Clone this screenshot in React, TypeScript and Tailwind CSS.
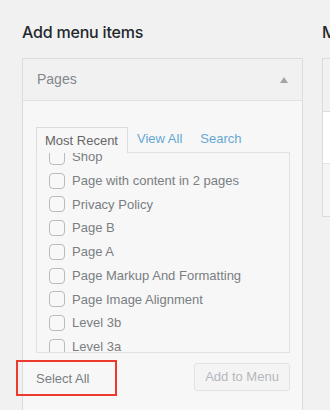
import React from 'react';

const pages = [
  'Shop',
  'Page with content in 2 pages',
  'Privacy Policy',
  'Page B',
  'Page A',
  'Page Markup And Formatting',
  'Page Image Alignment',
  'Level 3b',
  'Level 3a',
];

const App: React.FC = () => {
  return (
    <div
      className="relative w-[330px] h-[410px] overflow-hidden bg-[#f1f1f1] flex gap-[19px] pl-[22px]"
      style={{ fontFamily: '"Liberation Sans", Arial, sans-serif' }}
    >
      {/* Left column */}
      <div className="w-[281px] shrink-0">
        <h2 className="mt-[20px] h-6 leading-6 text-[16px] font-medium text-[#23282d] mb-[14px] tracking-[-0.2px] font-['Inter',sans-serif]">
          Add menu items
        </h2>

        <div className="border border-[#dcdcde] bg-[#f7f7f7] h-[400px]">
          {/* Header */}
          <div className="h-[42px] flex items-center justify-between pl-[14px] pr-[14px] bg-[#f1f1f1] border-b border-[#e2e2e2]">
            <span className="text-[14px] text-[#82878c]">Pages</span>
            <span className="w-0 h-0 border-l-[4px] border-r-[4px] border-b-[6px] border-l-transparent border-r-transparent border-b-[#a0a5aa]" />
          </div>

          {/* Body */}
          <div className="pt-[25px] pl-[13px] pr-[12px]">
            <div className="flex items-end text-[13px] h-[26px]">
              <div className="relative z-10 -mb-px h-[26px] w-[92px] border border-b-0 border-[#dcdcde] bg-[#f7f7f7] pl-2 leading-[26px] text-[#666]">
                Most Recent
              </div>
              <span className="ml-[9px] leading-[26px] text-[#65a8d4]">View All</span>
              <span className="ml-[18px] leading-[26px] text-[#65a8d4]">Search</span>
            </div>

            <div className="h-[201px] border border-[#e2e2e2] bg-[#f7f7f7] overflow-hidden">
              <ul className="-mt-[8px] pl-[12px]">
                {pages.map((p) => (
                  <li key={p} className="h-[23.75px] flex items-center gap-[7px]">
                    <span className="w-4 h-4 rounded-[4px] border border-[#b8bcc0] bg-[#f8f8f8] shrink-0" />
                    <span className="text-[13px] text-[#7a7e82] whitespace-nowrap">{p}</span>
                  </li>
                ))}
              </ul>
            </div>

            <div className="mt-[10px] flex items-center justify-between">
              <span className="text-[13px] text-[#7a7e82] mt-[3px]">Select All</span>
              <button className="h-[28px] w-[96px] rounded-[3px] border border-[#e2e2e2] bg-[#f4f4f4] text-[13px] text-[#b4b8bc]">
                Add to Menu
              </button>
            </div>
          </div>
        </div>
      </div>

      {/* Right column (cut off) */}
      <div className="w-[200px] shrink-0">
        <h2 className="mt-[20px] h-6 leading-6 text-[16px] font-medium text-[#23282d] mb-[14px] font-['Inter',sans-serif]">
          Menu structure
        </h2>
        <div className="border border-[#dcdcde]">
          <div className="h-[53px] bg-[#f1f1f1] border-b border-[#dcdcde]" />
          <div className="h-[52px] bg-white border-b border-[#e2e2e2]" />
          <div className="h-[52px] bg-[#f5f5f5]" />
        </div>
      </div>

      {/* Highlight annotation */}
      <div className="absolute left-[16px] top-[360px] w-[101px] h-[36px] border-2 border-[#ec3b2c]" />
    </div>
  );
};

export default App;
